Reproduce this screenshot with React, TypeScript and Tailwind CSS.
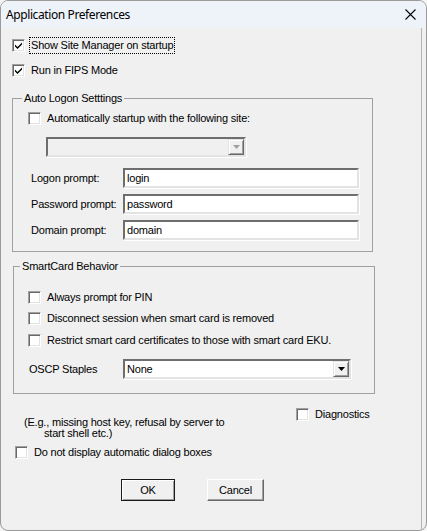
import React from 'react';

function Check({ checked = false }: { checked?: boolean }) {
  return (
    <span className="flex h-[13px] w-[13px] shrink-0 items-center justify-center border border-t-[#a0a0a0] border-l-[#a0a0a0] border-r-white border-b-white bg-white shadow-[inset_1px_1px_0_#696969,inset_-1px_-1px_0_#e3e3e3]">
      {checked && (
        <svg width="9" height="9" viewBox="0 0 9 9">
          <path d="M1 3.5 L3.5 6 L8 1.5 L8 3.5 L3.5 8 L1 5.5 Z" fill="#000" />
        </svg>
      )}
    </span>
  );
}

function CheckRow({ label, checked, focus }: { label: string; checked?: boolean; focus?: boolean }) {
  return (
    <div className="flex h-[17px] items-center">
      <Check checked={checked} />
      {focus ? (
        <span className="ml-[4px] flex h-[17px] items-center border border-dotted border-black px-[1px]">{label}</span>
      ) : (
        <span className="ml-[6px]">{label}</span>
      )}
    </div>
  );
}

function Arrow({ disabled }: { disabled?: boolean }) {
  return (
    <span className="flex h-[16px] w-[16px] items-center justify-center border border-t-[#e3e3e3] border-l-[#e3e3e3] border-r-[#696969] border-b-[#696969] bg-[#f0f0f0] shadow-[inset_1px_1px_0_#ffffff,inset_-1px_-1px_0_#a0a0a0]">
      <svg width="7" height="4" viewBox="0 0 7 4">
        <path d="M0 0 H7 L3.5 4 Z" fill={disabled ? '#a0a0a0' : '#000'} />
      </svg>
    </span>
  );
}

function Field({ label, value }: { label: string; value: string }) {
  return (
    <div className="flex items-center">
      <span className="w-[95px] pl-[3px]">{label}</span>
      <div className="flex h-[20px] w-[236px] items-center border-2 border-t-[#6e6e6e] border-l-[#6e6e6e] border-r-[#e3e3e3] border-b-[#e3e3e3] bg-white pl-[2px] shadow-[1px_1px_0_#ffffff]">
        {value}
      </div>
    </div>
  );
}

export default function App() {
  return (
    <div className="min-h-screen bg-[#f4f4f4]">
      <div className="flex h-[531px] w-[427px] flex-col overflow-hidden rounded-lg border border-[#9a9a9a] bg-[#f0f0f0] font-['Liberation_Sans',Arial,sans-serif] text-[11px] leading-[13px] tracking-[-0.2px] text-black">
        <div className="flex h-[27px] shrink-0 items-center justify-between bg-[#eef3f9] pl-[5px] pr-[10px]">
          <span className="font-['Noto_Sans',sans-serif] text-[12px] tracking-[-0.4px]">Application Preferences</span>
          <svg width="11" height="11" viewBox="0 0 11 11">
            <path d="M0.5 0.5 L10.5 10.5 M10.5 0.5 L0.5 10.5" stroke="#000" strokeWidth="1.1" />
          </svg>
        </div>

        <div className="mr-[4px] flex-1 border-r border-[#b4b4b4] pl-[11px] pt-[9px]">
          <CheckRow label="Show Site Manager on startup" checked focus />
          <div className="mt-[8px]">
            <CheckRow label="Run in FIPS Mode" checked />
          </div>

          <fieldset className="mt-[13px] w-[361px] border border-[#a0a0a0] pb-[11px]">
            <legend className="ml-[9px] px-[2px]">Auto Logon Setttings</legend>
            <div className="pl-[15px]">
              <div className="mt-[5px]">
                <CheckRow label="Automatically startup with the following site:" />
              </div>
              <div className="ml-[18px] mt-[10px] flex h-[20px] w-[200px] items-center justify-end border-2 border-t-[#6e6e6e] border-l-[#6e6e6e] border-r-[#e3e3e3] border-b-[#e3e3e3] bg-[#f0f0f0] shadow-[1px_1px_0_#ffffff]">
                <Arrow disabled />
              </div>
              <div className="mt-[11px] flex flex-col gap-[6px]">
                <Field label="Logon prompt:" value="login" />
                <Field label="Password prompt:" value="password" />
                <Field label="Domain prompt:" value="domain" />
              </div>
            </div>
          </fieldset>

          <fieldset className="ml-[1px] mt-[8px] w-[362px] border border-[#a0a0a0] pb-[14px]">
            <legend className="ml-[6px] px-[2px]">SmartCard Behavior</legend>
            <div className="pl-[14px]">
              <div className="mt-[16px]">
                <CheckRow label="Always prompt for PIN" />
              </div>
              <div className="mt-[4px]">
                <CheckRow label="Disconnect session when smart card is removed" />
              </div>
              <div className="mt-[5px]">
                <CheckRow label="Restrict smart card certificates to those with smart card EKU." />
              </div>
              <div className="mt-[10px] flex items-center">
                <span className="w-[95px] pl-[1px]">OSCP Staples</span>
                <div className="flex h-[20px] w-[228px] items-center justify-between border-2 border-t-[#6e6e6e] border-l-[#6e6e6e] border-r-[#e3e3e3] border-b-[#e3e3e3] bg-white pl-[2px] shadow-[1px_1px_0_#ffffff]">
                  <span>None</span>
                  <Arrow />
                </div>
              </div>
            </div>
          </fieldset>

          <div className="flex">
            <div className="w-[284px]">
              <div className="mt-[23px] pl-[12px] leading-[11px]">
                <div>(E.g., missing host key, refusal by server to</div>
                <div className="pl-[20px]">start shell etc.)</div>
              </div>
              <div className="ml-[3px] mt-[5px]">
                <CheckRow label="Do not display automatic dialog boxes" />
              </div>
            </div>
            <div className="mt-[12px]">
              <CheckRow label="Diagnostics" />
            </div>
          </div>

          <div className="ml-[109px] mt-[18px] flex gap-[32px]">
            <button className="flex h-[22px] w-[54px] items-center justify-center border border-[#1a1a1a] bg-[#f0f0f0] shadow-[inset_1px_1px_0_#ffffff,inset_-1px_-1px_0_#a0a0a0]">
              OK
            </button>
            <button className="flex h-[22px] w-[57px] items-center justify-center border border-t-white border-l-white border-r-[#696969] border-b-[#696969] bg-[#f0f0f0] shadow-[inset_-1px_-1px_0_#a0a0a0]">
              Cancel
            </button>
          </div>
        </div>
      </div>
    </div>
  );
}
